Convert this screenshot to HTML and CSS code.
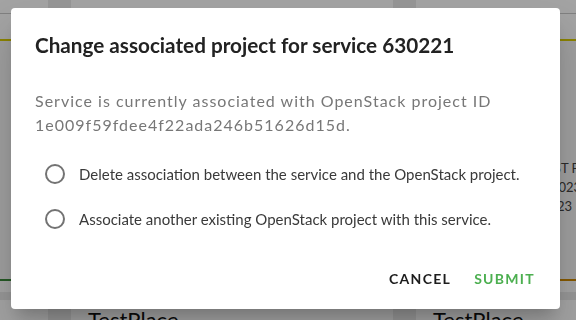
FILE: index.html
```html
<!DOCTYPE html>
<html lang="en">
<head>
  <meta charset="UTF-8">
  <meta name="viewport" content="width=device-width, initial-scale=1.0">
  <title>Services</title>
  <link rel="stylesheet" href="styles.css">
</head>
<body>
  <div class="board">
    <div class="card">
      <div class="card-head"></div>
      <div class="card-status status-yellow"></div>
      <div class="card-body"></div>
      <div class="card-status status-green"></div>
    </div>
    <div class="card">
      <div class="card-head"></div>
      <div class="card-status status-yellow"></div>
      <div class="card-body"></div>
      <div class="card-status status-green"></div>
    </div>
    <div class="card">
      <div class="card-head"></div>
      <div class="card-status status-yellow"></div>
      <div class="card-body">
        <p>Service type: VDC TEST PROJECT</p>
        <p>Valid through: 01.02.2023</p>
        <p>Updated on: 01.02.2023</p>
      </div>
      <div class="card-status status-orange"></div>
    </div>
    <div class="card"></div>
    <div class="card"><h3>TestPlace</h3></div>
    <div class="card"><h3>TestPlace</h3></div>
  </div>

  <div class="overlay"></div>

  <div class="dialog">
    <h2>Change associated project for service 630221</h2>
    <p class="info">Service is currently associated with OpenStack project ID 1e009f59fdee4f22ada246b51626d15d.</p>
    <div class="choices">
      <label class="choice">
        <input type="radio" name="action">
        <span class="circle"></span>
        <span>Delete association between the service and the OpenStack project.</span>
      </label>
      <label class="choice">
        <input type="radio" name="action">
        <span class="circle"></span>
        <span>Associate another existing OpenStack project with this service.</span>
      </label>
    </div>
    <div class="actions">
      <button class="btn">Cancel</button>
      <button class="btn btn-submit">Submit</button>
    </div>
  </div>
</body>
</html>
```

FILE: styles.css
```css
body {
  margin: 0;
  font-family: Lato, "Open Sans", sans-serif;
  background: #ebebeb;
  overflow: hidden;
  height: 320px;
}
.board {
  display: grid;
  grid-template-columns: 48px 322px 322px;
  grid-template-rows: 292px 60px;
  column-gap: 23px;
  row-gap: 8px;
}
.card {
  background: #fff;
}
.card-head {
  height: 13px;
  border-bottom: 1px solid #c8c8c8;
  background: #fff;
}
.card-status {
  height: 2px;
}
.status-yellow {
  margin-top: 25px;
  background: #d8cc00;
}
.status-green {
  background: #3a8a3a;
}
.status-orange {
  background: #d08a00;
}
.card-body {
  height: 238px;
  background: #f7f7f7;
  padding: 0 16px;
  font-size: 13px;
  color: #444;
  white-space: nowrap;
}
.card-body p {
  margin: 0;
  line-height: 19px;
}
.card-body p:first-child {
  padding-top: 118px;
}
.card h3 {
  margin: 0;
  padding: 6px 17px;
  font-size: 22px;
  font-weight: 400;
  color: #111;
}
.overlay {
  position: fixed;
  inset: 0;
  background: rgba(0, 0, 0, 0.36);
}
.dialog {
  position: absolute;
  left: 11px;
  top: 8px;
  width: 549px;
  height: 301px;
  box-sizing: border-box;
  padding: 24px 24px 0;
  background: #fff;
  border-radius: 4px;
  box-shadow: 0 11px 15px -7px rgba(0,0,0,0.2), 0 24px 38px 3px rgba(0,0,0,0.14);
}
.dialog h2 {
  margin: 0;
  font-size: 20.7px;
  line-height: 26px;
  font-weight: 700;
  color: #222;
}
.info {
  margin: 31px 0 0;
  font-size: 16px;
  line-height: 24px;
  letter-spacing: 1px;
  color: #777;
}
.choices {
  margin-top: 14px;
  display: flex;
  flex-direction: column;
}
.choice {
  display: flex;
  align-items: center;
  height: 45px;
  padding-left: 10px;
  font-size: 15px;
  color: #3a3a3a;
  cursor: pointer;
}
.choice input {
  display: none;
}
.circle {
  width: 16px;
  height: 16px;
  border: 2px solid #737373;
  border-radius: 50%;
  margin-right: 14px;
}
.actions {
  display: flex;
  justify-content: flex-end;
  gap: 7px;
  margin-top: 21px;
  margin-right: -7px;
}
.btn {
  border: 0;
  background: none;
  padding: 8px;
  font-family: inherit;
  font-size: 14px;
  font-weight: 700;
  letter-spacing: 1.3px;
  text-transform: uppercase;
  color: #1d1d1d;
}
.btn-submit {
  color: #4caf50;
}
```
